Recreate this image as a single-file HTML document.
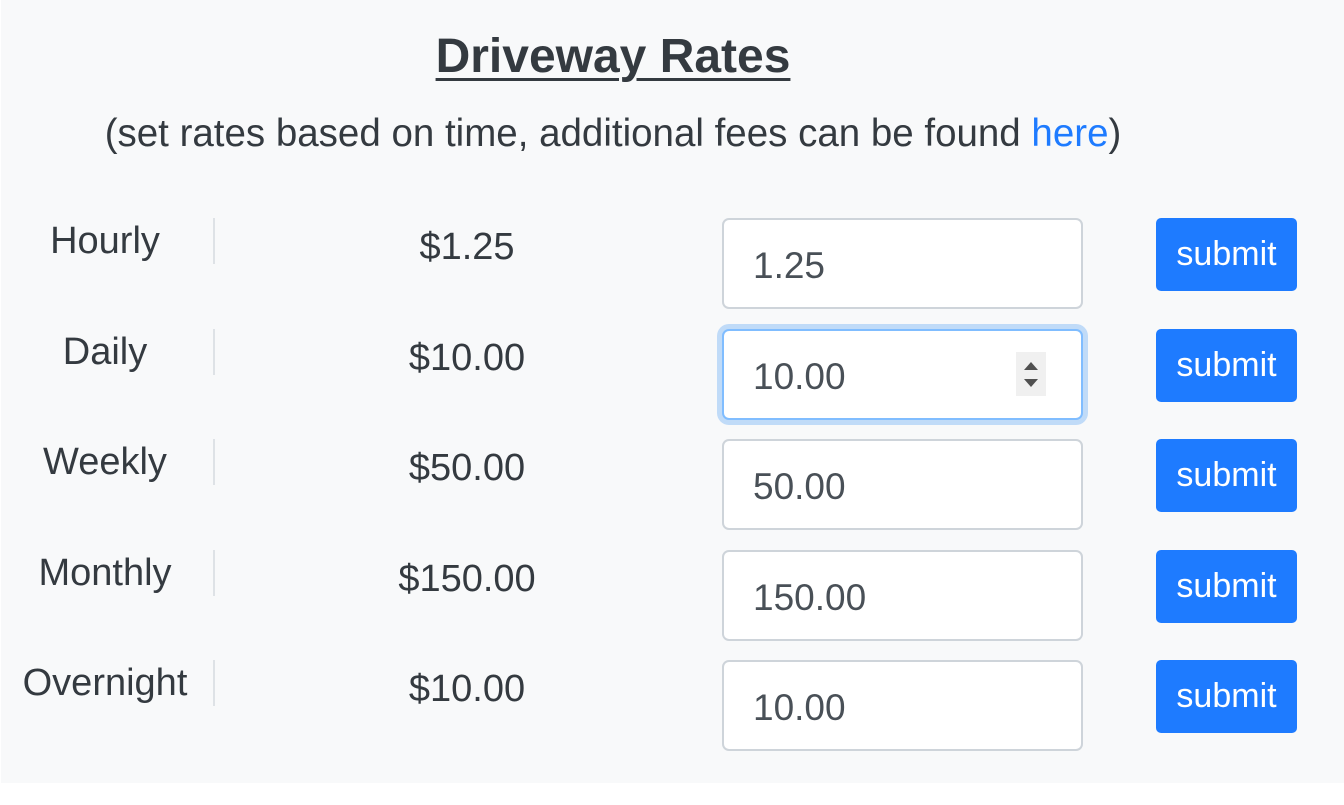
<!DOCTYPE html>
<html><head><style>
html,body{margin:0;padding:0;background:#fff;}
body{width:1344px;height:805px;position:relative;font-family:"Liberation Sans",Arial,sans-serif;color:#343a40;overflow:hidden}
.bg{position:absolute;left:1px;top:0;width:1343px;height:783px;background:#f8f9fa}
.title{position:absolute;left:0;width:1226px;top:29px;text-align:center;font-size:48px;font-weight:bold;text-decoration:underline;text-decoration-thickness:3px;text-underline-offset:6px}
.sub{position:absolute;left:0;width:1226px;top:112px;text-align:center;font-size:38.5px}
.sub a{color:#1e7bff;text-decoration:none}
.row{position:absolute;left:0;width:1344px;height:92px}
.lbl{position:absolute;left:0;width:210px;top:2px;text-align:center;font-size:38px}
.div{position:absolute;left:213px;top:0;width:2px;height:46px;background:#dee2e6}
.price{position:absolute;left:367px;width:200px;top:8px;text-align:center;font-size:38px}
.inp{position:absolute;left:722px;top:0;width:357px;height:87px;background:#fff;border:2px solid #ced4da;border-radius:7px;box-sizing:content-box}
.inp span{position:absolute;left:29px;top:25px;font-size:37px;color:#495057}
.focus{border-color:#80bdff;box-shadow:0 0 0 5px #c0dbf8}
.btn{position:absolute;left:1156px;top:0;width:141px;height:73px;background:#1e7bff;border-radius:5px;color:#fff;font-size:34px;text-align:center;line-height:72px}
.spin{position:absolute;left:292px;top:21px;width:30px;height:44px;background:#f0f0f0}
</style></head><body>
<div class="bg"></div>
<div class="title">Driveway Rates</div>
<div class="sub">(set rates based on time, additional fees can be found <a>here</a>)</div>

<div class="row" style="top:218px"><div class="lbl">Hourly</div><div class="div"></div><div class="price">$1.25</div><div class="inp"><span>1.25</span></div><div class="btn">submit</div></div>
<div class="row" style="top:329px"><div class="lbl">Daily</div><div class="div"></div><div class="price">$10.00</div><div class="inp focus"><span>10.00</span><div class="spin"><svg width="30" height="44"><path d="M8 18 L15 10 L22 18Z M8 27 L22 27 L15 35Z" fill="#505050"/></svg></div></div><div class="btn">submit</div></div>
<div class="row" style="top:439px"><div class="lbl">Weekly</div><div class="div"></div><div class="price">$50.00</div><div class="inp"><span>50.00</span></div><div class="btn">submit</div></div>
<div class="row" style="top:550px"><div class="lbl">Monthly</div><div class="div"></div><div class="price">$150.00</div><div class="inp"><span>150.00</span></div><div class="btn">submit</div></div>
<div class="row" style="top:660px"><div class="lbl">Overnight</div><div class="div"></div><div class="price">$10.00</div><div class="inp"><span>10.00</span></div><div class="btn">submit</div></div>
</body></html>
